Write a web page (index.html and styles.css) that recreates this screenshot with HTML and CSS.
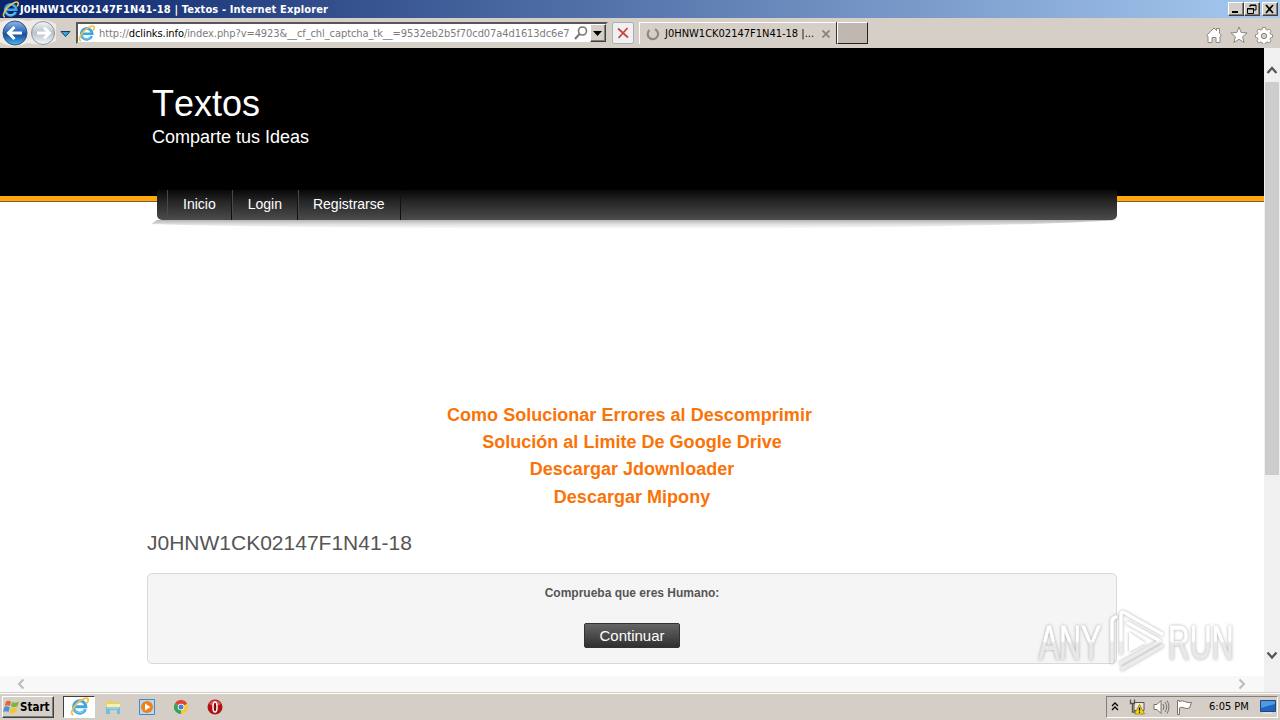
FILE: index.html
```html
<!DOCTYPE html>
<html lang="es">
<head>
  <meta charset="UTF-8" />
  <title>J0HNW1CK02147F1N41-18 | Textos</title>
  <link rel="stylesheet" href="styles.css">
</head>
<body>
  <svg width="0" height="0" class="defs">
    <defs>
      <linearGradient id="azul" x1="0" y1="0" x2="0" y2="1">
        <stop offset="0" stop-color="#8db9ea" /><stop offset=".45" stop-color="#2d68bd" /><stop offset=".55" stop-color="#174a9c" /><stop offset="1" stop-color="#4bb8f0" />
      </linearGradient>
      <linearGradient id="gris" x1="0" y1="0" x2="0" y2="1">
        <stop offset="0" stop-color="#f4f6f8" /><stop offset=".5" stop-color="#b9c0c8" /><stop offset="1" stop-color="#f7f9fa" />
      </linearGradient>
      <linearGradient id="tono" gradientUnits="userSpaceOnUse" x1="0" y1="0" x2="0" y2="66">
        <stop offset=".5" stop-color="#fff" /><stop offset=".54" stop-color="#ececec" />
      </linearGradient>
      <linearGradient id="tono-letras" gradientUnits="userSpaceOnUse" x1="0" y1="-36" x2="0" y2="0">
        <stop offset=".5" stop-color="#fff" /><stop offset=".56" stop-color="#e8e8e8" />
      </linearGradient>
      <symbol id="ie" viewBox="0 0 18 18">
        <path d="M14.6 11.6A5.800 5.800 0 1 1 15 9.300H5" fill="none" stroke="#3fa6e4" stroke-width="2.800" />
        <path d="M13.600 11.800A4.900 4.900 0 0 1 4.500 12" fill="none" stroke="#7fd0f7" stroke-width="1" />
        <path d="M3.200 16.800C.2 16.600 1.500 11.600 6 6.800 10.500 2 16-.1 17 1.900c.5 1-.1 2.600-1 4" fill="none" stroke="#edc24a" stroke-width="1.700" />
      </symbol>
    </defs>
  </svg>

  <div class="titulo-ventana">
    <svg class="ico-ie" width="17" height="17"><use href="#ie" /></svg>
    <span class="nombre">J0HNW1CK02147F1N41-18 | Textos - Internet Explorer</span>
    <div class="controles">
      <button class="ctl"><svg width="12" height="10"><path d="M2 8h6" stroke="#000" stroke-width="2" /></svg></button>
      <button class="ctl"><svg width="12" height="10"><path d="M4 1h6v5H8M4 1v2M4 1.500h6" fill="none" stroke="#000" /><path d="M1.500 4.500h6v5h-6zM1 5h7" fill="none" stroke="#000" /></svg></button>
      <button class="ctl cerrar"><svg width="12" height="10"><path d="M2 1l7 8M9 1L2 9" stroke="#000" stroke-width="1.700" /></svg></button>
    </div>
  </div>

  <div class="barra">
    <svg class="flechas" width="74" height="30">
      <path d="M0 4Q14-1 28 3q15-4 28 3v17q-13 6-28 2Q13 32 0 24z" fill="#eeebe7" />
      <circle cx="15" cy="15" r="12" fill="url(#azul)" stroke="#3b5478" />
      <path d="M22 15H9M14.500 9l-6 6 6 6" fill="none" stroke="#fff" stroke-width="3" />
      <circle cx="43" cy="15" r="11.500" fill="url(#gris)" stroke="#8a96a3" />
      <path d="M37 15h12M44 9.500l5.500 5.500-5.500 5.500" fill="none" stroke="#fff" stroke-width="3" />
      <path d="M61 13.500h9l-4.500 5z" fill="#3fa4dc" stroke="#123f72" />
    </svg>
    <div class="direccion">
      <svg width="17" height="17"><use href="#ie" /></svg>
      <span class="url">http://<b>dclinks.info</b>/index.php?v=4923&amp;__cf_chl_captcha_tk__=9532eb2b5f70cd07a4d1613dc6e7</span>
      <svg class="lupa" width="14" height="16"><circle cx="8.500" cy="6" r="4" fill="none" stroke="#777" stroke-width="1.600" /><path d="M5.500 9L1 14" stroke="#777" stroke-width="2" /></svg>
      <button class="desplegar"><svg width="9" height="5"><path d="M0 0h9L4.500 5z" /></svg></button>
    </div>
    <button class="detener"><svg width="12" height="12"><path d="M1 1.500l10 9M10.500 1L1.500 11" stroke="#c44340" stroke-width="1.700" /></svg></button>
    <div class="pestana">
      <svg width="14" height="14"><path d="M9 2.200A5.200 5.200 0 1 1 3.500 3" fill="none" stroke="#8d8983" stroke-width="2.200" /></svg>
      <span class="pestana-texto">J0HNW1CK02147F1N41-18 |...</span>
      <svg class="x" width="8" height="8"><path d="M.5.500l7 7M7.500.500l-7 7" stroke="#88827b" stroke-width="1.700" /></svg>
    </div>
    <div class="nueva"></div>
    <div class="herramientas">
      <svg width="18" height="18"><path d="M1.500 9.500L9 2l2.500 2.500V2.500h3v5l2 2-1.500 1v6h-4v-5H7v5H3v-6z" fill="#fff" stroke="#8b867f" /></svg>
      <svg width="18" height="18"><path d="M9 1l2.200 5.500 5.900.4-4.500 3.800 1.500 5.800L9 13.300l-5.100 3.200 1.500-5.800L.9 6.900l5.900-.4z" fill="#fff" stroke="#8b867f" /></svg>
      <svg width="18" height="18"><path d="M7.500 1.500h3l.4 2 1.500.6 1.700-1.100 2 2-1.100 1.700.6 1.500 1.900.4v2.800l-1.900.4-.6 1.500 1.100 1.700-2 2-1.700-1.100-1.500.6-.4 1.500h-3l-.4-1.500-1.500-.6L3.900 17l-2-2L3 13.300l-.6-1.500-1.900-.4V8.600l1.900-.4L3 6.700 1.900 5l2-2 1.700 1.100 1.500-.6z" fill="#fff" stroke="#8b867f" stroke-width=".9" /><circle cx="9" cy="10" r="2.700" fill="#d5cfc7" stroke="#8b867f" /></svg>
    </div>
  </div>

  <div class="ventana">
    <div class="pagina">
      <header class="cabecera">
        <h1>Textos</h1>
        <p>Comparte tus Ideas</p>
      </header>
      <div class="linea">
        <nav class="menu">
          <a>Inicio</a><a>Login</a><a>Registrarse</a>
        </nav>
        <svg class="sombra" width="976" height="14" viewBox="0 0 976 14" preserveAspectRatio="none">
          <defs><linearGradient id="som" x1="0" y1="0" x2="0" y2="1"><stop offset="0" stop-color="#b5b5b5" /><stop offset=".5" stop-color="#e2e2e2" /><stop offset="1" stop-color="#fff" /></linearGradient></defs>
          <path d="M8 0h960Q850 8 488 9 120 8 2 4z" fill="url(#som)" />
        </svg>
      </div>
      <main class="contenido">
        <div class="enlaces">
          <a class="primero">Como Solucionar Errores al Descomprimir</a>
          <a>Solución al Limite De Google Drive</a>
          <a>Descargar Jdownloader</a>
          <a class="ultimo">Descargar Mipony</a>
        </div>
        <h2>J0HNW1CK02147F1N41-18</h2>
        <div class="caja">
          <p>Comprueba que eres Humano:</p>
          <button class="continuar">Continuar</button>
        </div>
      </main>
    </div>
    <div class="scroll-v">
      <svg width="16" height="34"><path d="M3.500 25L8 20l4.500 5" fill="none" stroke="#555" stroke-width="2.200" /></svg>
      <div class="pulgar"></div>
      <svg class="abajo" width="16" height="34"><path d="M3.500 10.500L8 15.500l4.500-5" fill="none" stroke="#555" stroke-width="2.200" /></svg>
    </div>
    <div class="scroll-h">
      <svg width="8" height="12"><path d="M6.500 1.500L2 6l4.500 4.500" fill="none" stroke="#bbb" stroke-width="2" /></svg>
      <svg width="8" height="12"><path d="M1.500 1.500L6 6l-4.500 4.500" fill="none" stroke="#bbb" stroke-width="2" /></svg>
    </div>
  </div>

  <div class="tareas">
    <button class="inicio">
      <svg width="17" height="16"><path d="M3 2.500Q5.500.8 8 2.500L7 7Q4.500 5.500 1.800 7z" fill="#e8642a" /><path d="M9 3Q12.500 4.500 16 2.500L14.500 7.300Q11 9 8 7.300z" fill="#79ba3e" /><path d="M1.500 8Q4 6.500 6.700 8.200L5.500 13Q3 11.500.2 13z" fill="#4b8edb" /><path d="M7.700 8.500Q11 10 14.200 8.200L13 13.300Q9.500 15 6.500 13.200z" fill="#f6c433" /></svg>
      Start
    </button>
    <div class="app activa"><svg width="19" height="19"><use href="#ie" /></svg></div>
    <div class="app"><svg width="16" height="16"><path d="M1 3l5-2 2 2h7v7H1z" fill="#e9cf6c" /><path d="M2 5h13v4H2z" fill="#fbf0a5" /><path d="M1 8h14v7h-3v-4H5v4H1z" fill="#73bddd" /><path d="M2 9h12" stroke="#bde5f2" /></svg></div>
    <div class="app"><svg width="16" height="16"><path d="M.5.500h15v15H.5z" fill="#b7d9f3" stroke="#4688c5" /><circle cx="8" cy="8" r="6" fill="#ee8119" /><path d="M6 4.500v7l5.500-3.500z" fill="#fff" /></svg></div>
    <div class="app"><svg width="14" height="14"><path d="M7 7L.9 3.500A7 7 0 0 1 13.100 3.500z" fill="#df4435" /><path d="M7 7V14A7 7 0 0 1 .9 3.500z" fill="#36a35a" /><path d="M7 7l6.100-3.500A7 7 0 0 1 7 14z" fill="#f5c93b" /><path d="M7 3.500h6.100L7 7z" fill="#df4435" /><circle cx="7" cy="7" r="3.300" fill="#fff" /><circle cx="7" cy="7" r="2.500" fill="#4380d6" /></svg></div>
    <div class="app"><svg width="16" height="16"><circle cx="8" cy="8" r="7.500" fill="#b21116" /><path d="M2 5a7 7 0 0 1 12 0q-6 4-12 0z" fill="#dd5454" /><ellipse cx="8" cy="8" rx="2" ry="5" fill="#7f080b" stroke="#fff" stroke-width="1.500" /></svg></div>
    <div class="bandeja">
      <svg width="8" height="10"><path d="M1 4l3-3 3 3M1 8l3-3 3 3" fill="none" stroke="#000" stroke-width="1.300" /></svg>
      <svg class="red" width="17" height="16"><path d="M5 3.500h10v8H5z" fill="#e9e9e2" stroke="#57534c" /><path d="M1.500.500v4h4v-4M3.500 4v9h5" fill="none" stroke="#57534c" stroke-width="1.300" /><path d="M10.500 5.500l5 9.500h-10z" fill="#f5d51e" stroke="#ab8e10" /><path d="M10.500 8.500v3M10.500 12.500v1.300" stroke="#000" stroke-width="1.300" /></svg>
      <svg class="audio" width="17" height="16"><path d="M1 5.500h3l4-4v13l-4-4H1z" fill="#fff" stroke="#77726b" /><path d="M10 5q2 3 0 6M12 3q3.500 5 0 10M14 1.500q4 6.500 0 13" fill="none" stroke="#77726b" /></svg>
      <svg class="bandera" width="17" height="16"><path d="M1.500 15.500v-14h2v1q3-1.500 5 0 3 1.500 7 1l-2 5.500q-3 1-5 0-3-1.500-5 0v6.500z" fill="#fff" stroke="#77726b" /></svg>
      <span class="hora">6:05 PM</span>
      <svg class="escritorio" width="16" height="14"><path d="M.5.500h15v11H.5z" fill="#1f66bd" stroke="#224679" /><path d="M1 1h14v3L1 8z" fill="#4e9ae4" /><path d="M3 13h9" stroke="#e9edf2" /></svg>
    </div>
  </div>

  <svg class="marca" width="240" height="68">
    <g class="letras">
      <text transform="translate(3 52) scale(.63 1)">ANY</text>
      <text transform="translate(132 52) scale(.63 1)">RUN</text>
    </g>
    <g class="play">
      <path d="M76 55V15q0-4 4-5M85 46V7q0-3 4-1l37 21M92 16l32 18-39 22M86 62l40-23" />
      <path class="relleno" d="M93 25v20l17-9z" />
    </g>
  </svg>
</body>
</html>
```

FILE: styles.css
```css
* {
  box-sizing: border-box;
}

body {
  width: 1280px;
  height: 720px;
  margin: 0;
  overflow: hidden;
  position: relative;
  display: flex;
  flex-direction: column;
  background: #fff;
  font-family: "Liberation Sans", Arial, sans-serif;
}

svg {
  display: block;
  flex: none;
}

.defs {
  position: absolute;
}

button {
  padding: 0;
  margin: 0;
  font-family: inherit;
}

h1, h2, p {
  margin: 0;
  font-weight: normal;
}

/* ventana */
.titulo-ventana {
  height: 18px;
  flex: none;
  display: flex;
  align-items: center;
  padding-left: 2px;
  background: linear-gradient(90deg, #0a246a, #a6caf0);
  color: #fff;
}

.nombre {
  margin-left: 1px;
  font: bold 11px/17px "DejaVu Sans Condensed", "DejaVu Sans", sans-serif;
  letter-spacing: .14px;
  white-space: nowrap;
}

.controles {
  margin-left: auto;
  display: flex;
  padding-right: 2px;
}

.ctl, .desplegar, .inicio {
  background: #d4d0c8;
  border: 1px solid;
  border-color: #fff #404040 #404040 #fff;
  box-shadow: inset -1px -1px #808080;
}

.ctl {
  width: 16px;
  height: 14px;
  padding-left: 1px;
}

.cerrar {
  margin-left: 2px;
}

.barra {
  height: 30px;
  flex: none;
  display: flex;
  align-items: center;
  background: #d6cfc7;
}

.direccion {
  width: 532px;
  height: 22px;
  margin-left: 2px;
  display: flex;
  align-items: center;
  background: #fff;
  border: 2px solid;
  border-color: #59565a #d4d0c8 #d4d0c8 #59565a;
  font: 11px/16px "DejaVu Sans Condensed", "DejaVu Sans", sans-serif;
  color: #7c7c7c;
}

.url {
  width: 474px;
  margin-left: 4px;
  padding-top: 2px;
  letter-spacing: -.08px;
  white-space: nowrap;
}

.url b {
  font-weight: normal;
  color: #000;
}

.lupa {
  margin-left: 1px;
}

.desplegar {
  width: 16px;
  height: 18px;
  margin-left: auto;
  padding-left: 2px;
}

.detener {
  width: 22px;
  height: 22px;
  margin-left: 4px;
  padding-left: 4px;
  background: #f1eff0;
  border: 1px solid #aab0b8;
  border-radius: 2px;
}

.pestana {
  width: 198px;
  height: 22px;
  margin-left: 5px;
  padding-left: 6px;
  display: flex;
  align-items: center;
  border-top: 1px solid #fff;
  border-left: 1px solid #fff;
  font: 11px/18px "DejaVu Sans Condensed", "DejaVu Sans", sans-serif;
}

.pestana-texto {
  width: 152px;
  margin-left: 5px;
  white-space: nowrap;
}

.x {
  margin-left: 5px;
}

.nueva {
  width: 31px;
  height: 22px;
  background: #c0b8b0;
  border: 1px solid;
  border-color: #fff #222 #222 #fff;
  box-shadow: -1px 0 #333;
}

.herramientas {
  display: flex;
  gap: 7px;
  margin-left: auto;
  padding: 3px 7px 0 0;
}

/* pagina */
.ventana {
  height: 644px;
  flex: none;
  display: grid;
  grid-template-columns: 1264px 16px;
  grid-template-rows: 628px 16px;
}

.pagina {
  overflow: hidden;
  background: #fff;
}

.cabecera {
  height: 142px;
  padding: 35px 0 0 152px;
  background: #000;
  color: #fff;
}

.cabecera h1 {
  font-size: 36px;
  line-height: 41px;
  font-kerning: none;
}

.cabecera p {
  font-size: 18px;
  line-height: 26px;
}

.linea {
  height: 50px;
  padding-left: 157px;
  background: linear-gradient(#000 6px, #ffa70f 6px, #ffa70f 11px, #77602c 11px, #77602c 12px, #fff 12px);
}

.menu {
  width: 960px;
  height: 30px;
  padding-left: 10px;
  display: flex;
  background: linear-gradient(#080808, #272727 40%, #4c4c4c);
  border-radius: 0 0 5px 5px;
}

.menu a {
  padding: 0 15px;
  color: #fff;
  font-size: 14px;
  line-height: 29px;
  border-left: 1px solid #484848;
  border-right: 1px solid #111;
}

.menu a:last-child {
  padding: 0 15px 0 14px;
}

.sombra {
  margin-left: -8px;
}

.contenido {
  padding: 162px 0 0 147px;
}

.enlaces {
  width: 970px;
  display: flex;
  flex-direction: column;
  align-items: center;
}

.enlaces a {
  font-size: 18px;
  font-weight: bold;
  line-height: 27px;
  letter-spacing: .02px;
  color: #fa7307;
}

.enlaces .primero {
  padding-right: 5px;
}

.enlaces .ultimo {
  line-height: 29px;
}

.contenido h2 {
  margin-top: 18px;
  font-size: 21px;
  line-height: 26px;
  color: #555;
}

.caja {
  width: 970px;
  height: 91px;
  margin-top: 17px;
  padding-top: 11px;
  display: flex;
  flex-direction: column;
  align-items: center;
  background: #f5f5f5;
  border: 1px solid #d9d9d9;
  border-radius: 5px;
}

.caja p {
  font-size: 12px;
  font-weight: bold;
  line-height: 16px;
  color: #555;
}

.continuar {
  width: 96px;
  height: 25px;
  margin-top: 22px;
  border: 1px solid #333;
  border-radius: 2px;
  background: linear-gradient(#656565, #303030);
  color: #fff;
  font-size: 15px;
}

.scroll-v {
  grid-row: 1 / 3;
  grid-column: 2;
  display: flex;
  flex-direction: column;
  background: #f0f0f0;
}

.pulgar {
  width: 14px;
  height: 393px;
  margin-left: 1px;
  background: #cdcdcd;
}

.abajo {
  margin-top: 167px;
}

.scroll-h {
  display: flex;
  justify-content: space-between;
  align-items: center;
  padding: 0 18px 0 17px;
  background: #f8f8f8;
}

/* barra de tareas */
.tareas {
  height: 28px;
  flex: none;
  display: flex;
  align-items: center;
  padding: 1px 2px 1px;
  background: #d4cec6;
  border-top: 1px solid #d4d0c8;
  box-shadow: inset 0 1px #fff;
}

.inicio {
  width: 52px;
  height: 22px;
  margin-right: 9px;
  display: flex;
  align-items: center;
  font: bold 11.5px "DejaVu Sans Condensed", "DejaVu Sans", sans-serif;
  color: #000;
}

.app {
  width: 32px;
  height: 22px;
  margin-right: 2px;
  display: flex;
  align-items: center;
  justify-content: center;
}

.activa {
  background: #fff;
  border: 1px solid;
  border-color: #404040 #fff #fff #404040;
}

.bandeja {
  width: 172px;
  height: 22px;
  margin-left: auto;
  padding-left: 4px;
  display: flex;
  align-items: center;
  border: 1px solid;
  border-color: #808080 #fff #fff #808080;
  font: 11px "DejaVu Sans Condensed", "DejaVu Sans", sans-serif;
}

.red {
  margin-left: 10px;
}

.audio {
  margin-left: 7px;
}

.bandera {
  margin-left: 6px;
}

.hora {
  width: 40px;
  margin-left: 16px;
  white-space: nowrap;
}

.escritorio {
  margin-left: 11px;
}

/* marca de agua */
.marca {
  position: absolute;
  left: 1036px;
  top: 607px;
  filter: drop-shadow(0 0 1.5px rgba(0, 0, 0, .33));
}

.letras {
  fill: url(#tono-letras);
  stroke: url(#tono-letras);
  stroke-width: .8;
  font: 48px "Liberation Sans", Arial, sans-serif;
}

.play {
  fill: none;
  stroke: url(#tono);
  stroke-width: 3.5;
  stroke-linecap: round;
  stroke-linejoin: round;
}

.relleno {
  fill: #fff;
  stroke: none;
}
```
